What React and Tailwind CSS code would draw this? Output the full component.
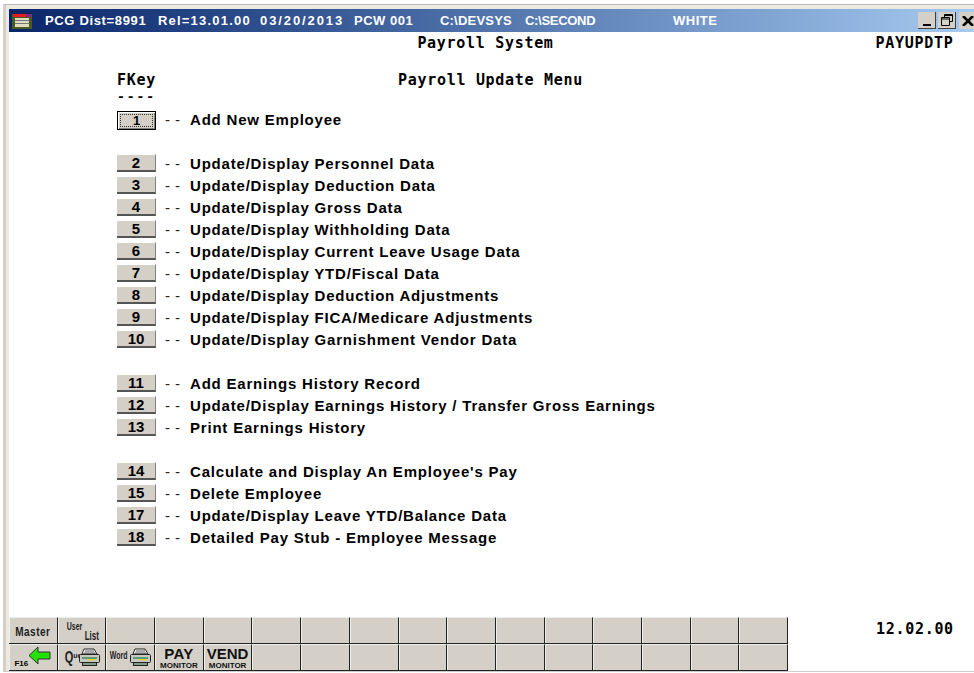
import React from 'react';

const MONO = "font-['DejaVu_Sans_Mono','Liberation_Mono',monospace] font-bold";

const groups = [
  [['1', 'Add New Employee']],
  [
    ['2', 'Update/Display Personnel Data'],
    ['3', 'Update/Display Deduction Data'],
    ['4', 'Update/Display Gross Data'],
    ['5', 'Update/Display Withholding Data'],
    ['6', 'Update/Display Current Leave Usage Data'],
    ['7', 'Update/Display YTD/Fiscal Data'],
    ['8', 'Update/Display Deduction Adjustments'],
    ['9', 'Update/Display FICA/Medicare Adjustments'],
    ['10', 'Update/Display Garnishment Vendor Data'],
  ],
  [
    ['11', 'Add Earnings History Record'],
    ['12', 'Update/Display Earnings History / Transfer Gross Earnings'],
    ['13', 'Print Earnings History'],
  ],
  [
    ['14', "Calculate and Display An Employee's Pay"],
    ['15', 'Delete Employee'],
    ['17', 'Update/Display Leave YTD/Balance Data'],
    ['18', 'Detailed Pay Stub - Employee Message'],
  ],
];

function KeyButton({ label, focused }) {
  if (focused) {
    return (
      <button className="flex h-[19px] w-[39px] items-center justify-center border border-black bg-[#d4d0c8] p-[2px] shadow-[inset_1px_1px_0_#fff,inset_-1px_-1px_0_#808080]">
        <span className="flex h-full w-full items-center justify-center border border-dotted border-[#333] text-[13px] leading-none text-black">
          {label}
        </span>
      </button>
    );
  }
  return (
    <button className="mb-[2px] flex h-[18px] w-[39px] items-center justify-center border-b-2 border-r border-t border-b-[#555] border-r-[#808080] border-t-white bg-[#d4d0c8] text-[15px] leading-none text-black">
      {label}
    </button>
  );
}

function MenuRow({ fkey, text }) {
  return (
    <div className="flex h-[22px] items-center">
      <KeyButton label={fkey} focused={fkey === '1'} />
      <span className="ml-[9px] w-[25px] font-normal tracking-[5px] text-[#222]">--</span>
      <span className="tracking-[0.8px]">{text}</span>
    </div>
  );
}

function Printer({ className = '' }) {
  return (
    <svg width="21" height="19" viewBox="0 0 21 19" className={`shrink-0 ${className}`}>
      <path d="M5 1h10l3 5H3z" fill="#fff" stroke="#222" />
      <path d="M6 3h9M5 5h11" stroke="#555" />
      <rect x="0.5" y="6.5" width="20" height="8" rx="1" fill="#c8c8c0" stroke="#222" />
      <rect x="3" y="9" width="15" height="2" fill="#5f9a78" />
      <rect x="9" y="11" width="7" height="1.5" fill="#e6d020" />
      <rect x="3.5" y="14.5" width="14" height="3" fill="#7f9a88" stroke="#222" />
    </svg>
  );
}

function ToolCell({ children, className = '' }) {
  return (
    <div className={`flex items-center justify-center overflow-hidden border-b border-r border-t border-b-[#222] border-r-[#222] border-t-[#eee] bg-[#d4d0c8] shadow-[inset_1px_0_0_#f0eee8] ${className}`}>
      {children}
    </div>
  );
}

function Toolbar() {
  const top = [
    <span key="m" className="mt-[2px] scale-y-125 text-[10px] font-bold tracking-[0.5px] text-[#222]">Master</span>,
    <span key="u" className="relative h-full w-full font-bold leading-none text-[#222]">
      <span className="absolute left-[9px] top-[5px] scale-y-150 text-[7px]">User</span>
      <span className="absolute left-[27px] top-[15px] scale-y-150 text-[8px]">List</span>
    </span>,
  ];
  const bottom = [
    <div key="back" className="flex items-end">
      <span className="mb-[1px] text-[8px] font-bold leading-none text-black">F16</span>
      <svg width="23" height="19" viewBox="0 0 23 19" className="mb-[4px]">
        <path d="M1 9.5 10 1v5h12v7H10v5z" fill="#22e000" stroke="#333" />
      </svg>
    </div>,
    <div key="que" className="ml-[2px] flex items-center">
      <span className="scale-y-150 text-[11px] font-bold leading-none text-[#222]">Q</span>
      <span className="mb-[5px] text-[7px] font-bold leading-none text-[#222]">ue</span>
      <Printer className="-ml-[2px]" />
    </div>,
    <div key="word" className="flex items-center gap-[2px]">
      <span className="mb-[4px] scale-y-150 text-[7px] font-bold leading-none text-[#222]">Word</span>
      <Printer />
    </div>,
    <div key="pay" className="flex flex-col items-center text-[#111]">
      <span className="text-[15px] font-bold leading-[16px] tracking-[0.3px]">PAY</span>
      <span className="text-[8px] font-bold leading-[8px]">MONITOR</span>
    </div>,
    <div key="vend" className="flex flex-col items-center text-[#111]">
      <span className="text-[15px] font-bold leading-[16px]">VEND</span>
      <span className="text-[8px] font-bold leading-[8px]">MONITOR</span>
    </div>,
  ];

  return (
    <div className="grid w-[779px] grid-cols-[repeat(16,1fr)] grid-rows-[27px_27px]">
      {Array.from({ length: 16 }, (_, i) => (
        <ToolCell key={`t${i}`}>{top[i]}</ToolCell>
      ))}
      {Array.from({ length: 16 }, (_, i) => (
        <ToolCell key={`b${i}`}>{bottom[i]}</ToolCell>
      ))}
    </div>
  );
}

export default function App() {
  return (
    <div className="h-[673px] w-[974px] overflow-hidden bg-white pl-[3px] pt-[4px] pb-px font-['Liberation_Sans',Arial,sans-serif]">
      <div className="flex h-full flex-col border-b border-l-[3px] border-t border-b-[#ccc] border-l-[#d4d0c8] border-t-[#bbb] bg-[#ece9e2] pl-[3px] pt-[4px]">
        {/* title bar */}
        <div className="flex h-[23px] shrink-0 items-center bg-gradient-to-r from-[#0a246a] to-[#a6caf0] pl-[3px] text-[13px] font-bold text-white">
          <svg width="20" height="16" viewBox="0 0 20 16" className="shrink-0">
            <rect width="20" height="16" fill="#4a5a20" />
            <rect width="20" height="1" fill="#202050" />
            <rect x="1" y="1" width="13" height="3" fill="#e02020" />
            <rect x="14" y="1" width="5" height="3" fill="#8a2090" />
            <rect x="3" y="5" width="14" height="9" fill="#e0dcc0" />
            <path d="M3 7.5h14M3 10.5h14" stroke="#777" />
          </svg>
          <span className="ml-[13px] w-[113px] tracking-[0.65px]">PCG Dist=8991</span>
          <span className="w-[102px] tracking-[1.2px]">Rel=13.01.00</span>
          <span className="w-[94px] tracking-[1.9px]">03/20/2013</span>
          <span className="w-[86px] tracking-[0.5px]">PCW 001</span>
          <span className="w-[85px] tracking-[0.2px]">C:\DEVSYS</span>
          <span className="w-[148px] tracking-[-0.3px]">C:\SECOND</span>
          <span className="tracking-[0.5px]">WHITE</span>
          <div className="ml-auto flex items-center gap-[2px]">
            <span className="flex h-[17px] w-[18px] items-end justify-center border-b border-r border-b-[#404040] border-r-[#404040] bg-[#d4d0c8] pb-[2px]">
              <span className="h-[2px] w-[8px] bg-black" />
            </span>
            <span className="flex h-[17px] w-[18px] items-center justify-center border-b border-r border-b-[#404040] border-r-[#404040] bg-[#d4d0c8]">
              <svg width="12" height="12" viewBox="0 0 12 12" fill="none" stroke="#000">
                <path d="M3.5 3V.5h8v7H9M3.5 1.5h8M.5 3.5h8v8h-8zM.5 5h8" />
              </svg>
            </span>
            <span className="ml-px flex h-[17px] w-[15px] items-center pl-[3px] bg-[#d4d0c8]">
              <svg width="12" height="10" viewBox="0 0 12 10" stroke="#000" strokeWidth="2.6" className="shrink-0">
                <path d="M1 0l10 10M11 0 1 10" />
              </svg>
            </span>
          </div>
        </div>

        {/* screen body */}
        <div className="relative flex min-h-0 flex-1 flex-col bg-white text-black">
          <div className={`grid grid-cols-[1fr_auto_1fr] pt-[2px] text-[15px] leading-[18px] tracking-[0.7px] ${MONO}`}>
            <span />
            <span className="-translate-x-[6px]">Payroll System</span>
            <span className="pl-[316px]">PAYUPDTP</span>
          </div>

          <div className={`mt-[19px] grid grid-cols-[1fr_auto_1fr] text-[15px] leading-[18px] tracking-[0.7px] ${MONO}`}>
            <span className="pl-[108px]">FKey</span>
            <span className="-translate-x-[1px]">Payroll Update Menu</span>
            <span />
          </div>
          <div className={`pl-[108px] text-[13px] leading-[15px] tracking-[1.9px] ${MONO}`}>----</div>

          <div className="mt-[5px] flex flex-col gap-[22px] pl-[108px] text-[15px] font-bold">
            {groups.map((rows, i) => (
              <div key={i}>
                {rows.map(([fkey, text]) => (
                  <MenuRow key={fkey} fkey={fkey} text={text} />
                ))}
              </div>
            ))}
          </div>

          <div className="mt-auto flex items-start">
            <Toolbar />
            <span className={`ml-[88px] mt-[1px] text-[15px] tracking-[0.7px] ${MONO}`}>12.02.00</span>
          </div>
        </div>
      </div>
    </div>
  );
}
